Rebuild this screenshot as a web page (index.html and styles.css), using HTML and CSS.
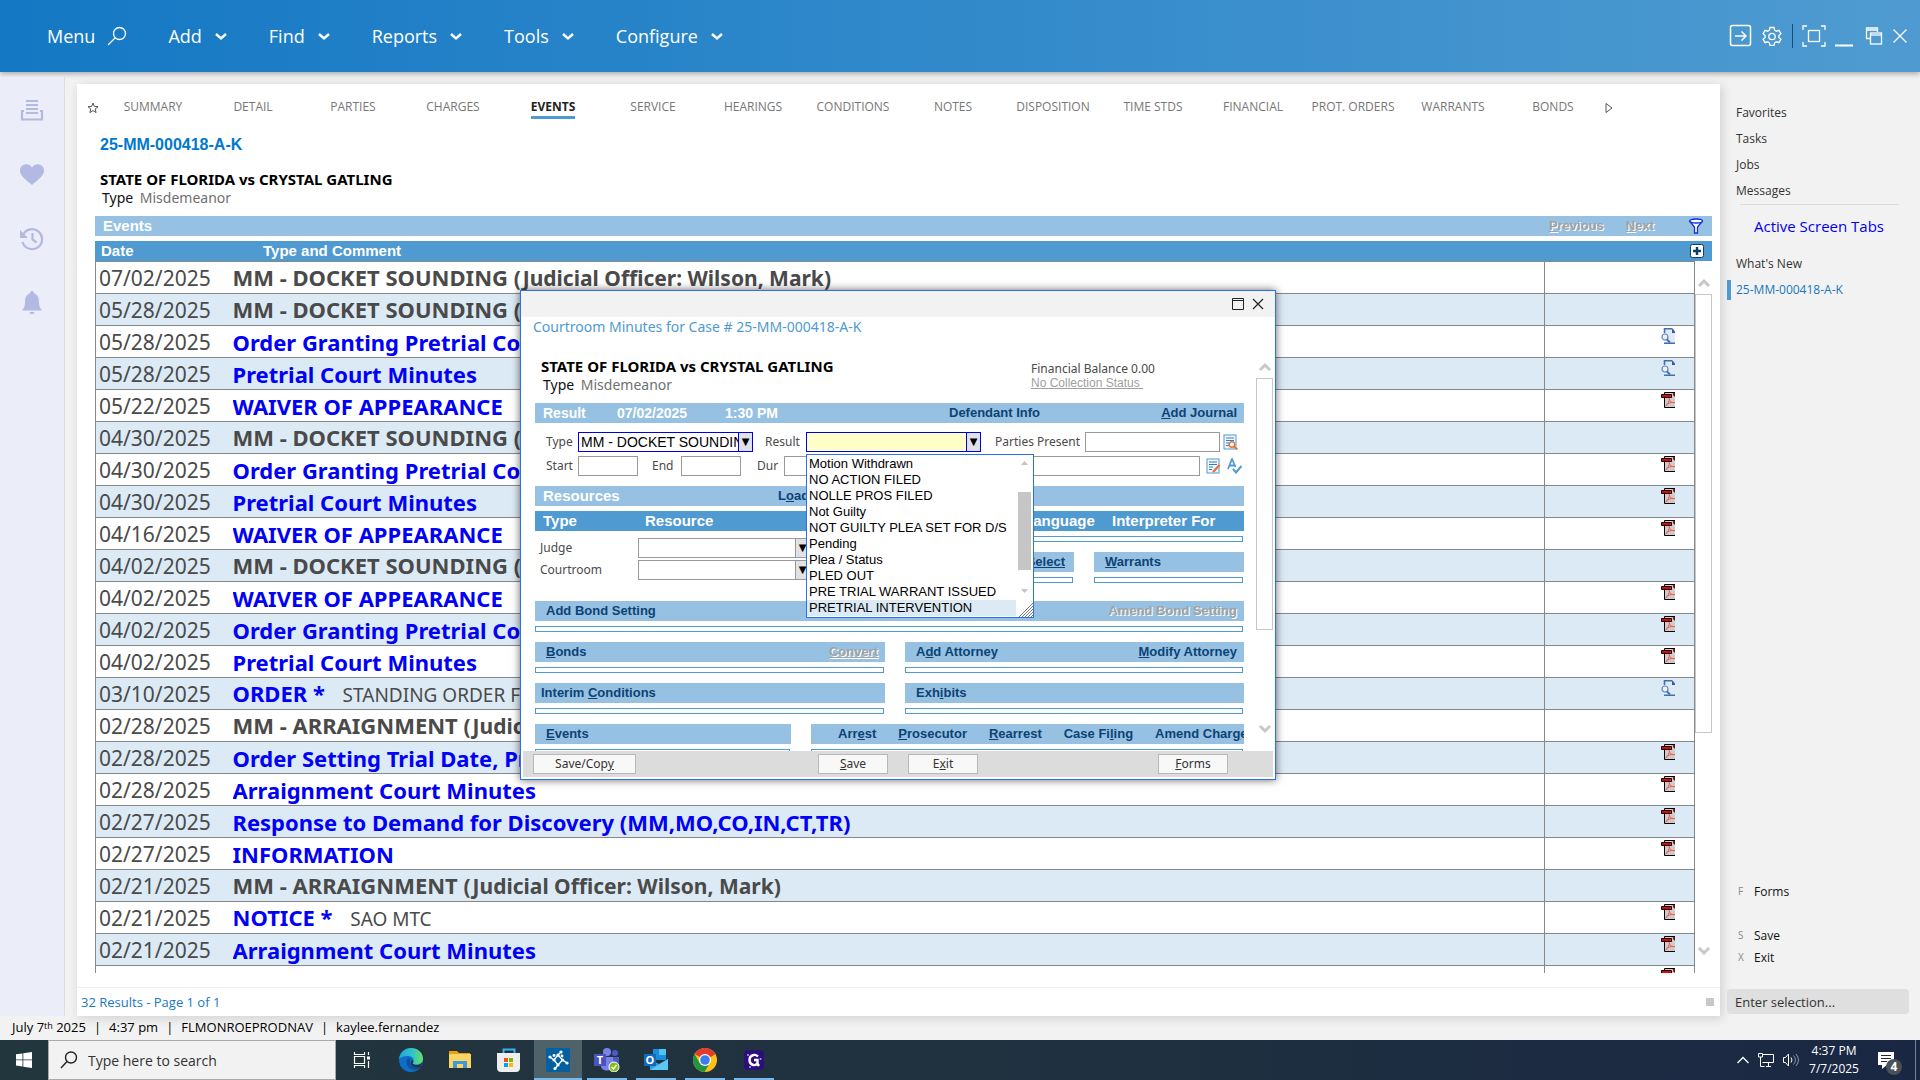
FILE: index.html
```
<!DOCTYPE html>
<html lang="en">
<head>
    <title>Court Case Events</title>
    <meta charset="UTF-8" />
    <meta name="viewport" content="width=device-width, initial-scale=1.0" />
    <link rel="stylesheet" href="styles.css">
</head>
<body>
    <svg class="sprite">
        <symbol id="chev" viewBox="0 0 14 14"><path d="M2 5l5 4.500 5-4.500" fill="none" stroke="currentColor" stroke-width="2.400"/></symbol>
        <symbol id="scrollUp" viewBox="0 0 14 10"><path d="M2 8l5-5 5 5" fill="none" stroke="#c8c8c8" stroke-width="3"/></symbol>
        <symbol id="scrollDown" viewBox="0 0 14 10"><path d="M2 2l5 5 5-5" fill="none" stroke="#c8c8c8" stroke-width="3"/></symbol>
        <symbol id="pdf" viewBox="0 0 14 16">
            <path d="M3.500 1v14.500H14V1z" fill="#ccc"/>
            <path d="M3.500 5v10.500H14M3.500 3V.500H14" fill="none" stroke="#000"/>
            <path d="M.500 2.500h10v3H.500z" fill="#e00" stroke="#000"/>
            <path d="M12 .500h2V4h-1z" fill="#e00" stroke="#000" stroke-width=".6"/>
            <path d="M4.500 14c2-1 4-4.500 3.800-7.500.5 3.500 3 4.500 5.700 4-4-.5-7 .5-9 3" fill="none" stroke="#f75a50"/>
        </symbol>
        <symbol id="doc" viewBox="0 0 14 16">
            <path d="M3.500.500h8.500l2 2V15.500H3.500z" fill="#e3e9f4"/>
            <path d="M3.500 5V.800H11M3 15.200h11" fill="none" stroke="#3e6fae" stroke-width="1.600"/>
            <path d="M11 0l3 3.500V5h-3z" fill="#2f5fa0"/>
            <circle cx="4" cy="9" r="3" fill="#e8f3fb" stroke="#5a86bd" stroke-width="1.200"/>
            <path d="M6 11.500l3 3" stroke="#3e6fae" stroke-width="1.800"/>
        </symbol>
    </svg>

    <header class="topbar">
        <nav class="menu">
            <a href="#" class="menu-item">Menu
                <svg width="20" height="20" viewBox="0 0 20 20"><circle cx="12.500" cy="7.500" r="6" fill="none" stroke="currentColor" stroke-width="1.300"/><path d="M8 12l-7 7" stroke="currentColor" stroke-width="1.300"/></svg>
            </a>
            <a href="#" class="menu-item">Add <svg width="14" height="14"><use href="#chev"/></svg></a>
            <a href="#" class="menu-item">Find <svg width="14" height="14"><use href="#chev"/></svg></a>
            <a href="#" class="menu-item">Reports <svg width="14" height="14"><use href="#chev"/></svg></a>
            <a href="#" class="menu-item">Tools <svg width="14" height="14"><use href="#chev"/></svg></a>
            <a href="#" class="menu-item">Configure <svg width="14" height="14"><use href="#chev"/></svg></a>
        </nav>
        <div class="window-tools">
            <button class="tool" title="Go"><svg width="24" height="24" viewBox="0 0 24 24" fill="none" stroke="#fff"><rect x="1.500" y="1.500" width="20" height="20" rx="2" stroke-width="1.500"/><path d="M6 12h11M12.500 7.500L17 12l-4.500 4.500" stroke-width="1.500"/></svg></button>
            <button class="tool" title="Settings"><svg width="20" height="20" viewBox="0 0 20 20" fill="none" stroke="#fff" stroke-width="1.300"><path d="M8 1.500h4l.6 2.700 1.700 1 2.600-.9 2 3.400-2 1.800v2l2 1.800-2 3.400-2.600-.9-1.700 1-.6 2.700H8l-.6-2.700-1.700-1-2.600.9-2-3.400 2-1.800v-2l-2-1.800 2-3.400 2.600.9 1.700-1z"/><circle cx="10" cy="10.500" r="3.200"/></svg></button>
            <span class="tool-divider"></span>
            <button class="tool" title="Full screen"><svg width="24" height="24" viewBox="0 0 24 24" fill="none" stroke="#fff" stroke-width="1.300"><path d="M1 6V2h4M19 2h4v4M23 18v4h-4M5 22H1v-4"/><rect x="6.500" y="6.500" width="11" height="11"/></svg></button>
            <button class="tool" title="Minimize"><svg width="18" height="24" viewBox="0 0 18 24"><path d="M0 21.500h18" stroke="#fff" stroke-width="2"/></svg></button>
            <button class="tool tool-restore" title="Restore"><svg width="18" height="20" viewBox="0 0 18 20" fill="none" stroke="#fff" stroke-width="1.300"><path d="M5 12.500H1.500V2h11v4M1.500 4h11"/><rect x="5.500" y="7" width="11" height="11"/><path d="M5.500 9h11"/></svg></button>
            <button class="tool" title="Close"><svg width="16" height="16" viewBox="0 0 16 16"><path d="M1.500 1.500l13 13M14.500 1.500l-13 13" stroke="#fff" stroke-width="1.200"/></svg></button>
        </div>
    </header>

    <div class="workspace">
        <aside class="rail">
            <button title="Inbox"><svg width="24" height="24" viewBox="0 0 24 24" fill="none" stroke="#b3b9e2" stroke-width="2"><path d="M6 2h12M6 6h12M6 10h12M6 14h12"/><path d="M4 12H2v8.500h20V12h-2" stroke-width="2.200"/></svg></button>
            <button title="Favorites"><svg width="24" height="24" viewBox="0 0 24 24"><path d="M12 22C5 16 0 12.500 0 7.500 0 1 8.500-1 12 4.500 15.500-1 24 1 24 7.500 24 12.500 19 16 12 22z" fill="#b3b9e2"/></svg></button>
            <button title="History"><svg width="24" height="24" viewBox="0 0 24 24" fill="none" stroke="#b3b9e2" stroke-width="2.200"><path d="M3 8a10 10 0 1 1-.5 7"/><path d="M12.500 6v6.500l4 3"/><path d="M0 3v8h8z" fill="#b3b9e2" stroke="none"/></svg></button>
            <button title="Alerts"><svg width="24" height="24" viewBox="0 0 24 24"><path d="M12 0c1.300 0 2 1 2 2.500 4 1 5 4.500 5 9 0 4 1 5.500 3 8H2c2-2.500 3-4 3-8 0-4.500 1-8 5-9C10 1 10.700 0 12 0zM9.500 21h5c-.5 3-4.500 3-5 0z" fill="#b3b9e2"/></svg></button>
        </aside>

        <main class="panel">
            <nav class="tabs">
                <button class="tab-icon tab-star" title="Favorite"><svg width="12" height="12" viewBox="0 0 12 12"><path d="M6 1l1.400 3.500 3.600.2-2.800 2.300.9 3.600L6 8.600l-3.100 2 .9-3.600L1 4.700l3.600-.2z" fill="none" stroke="#555"/></svg></button>
                <a href="#"><span>SUMMARY</span></a>
                <a href="#"><span>DETAIL</span></a>
                <a href="#"><span>PARTIES</span></a>
                <a href="#"><span>CHARGES</span></a>
                <a href="#" class="active"><span>EVENTS</span></a>
                <a href="#"><span>SERVICE</span></a>
                <a href="#"><span>HEARINGS</span></a>
                <a href="#"><span>CONDITIONS</span></a>
                <a href="#"><span>NOTES</span></a>
                <a href="#"><span>DISPOSITION</span></a>
                <a href="#"><span>TIME STDS</span></a>
                <a href="#"><span>FINANCIAL</span></a>
                <a href="#"><span>PROT. ORDERS</span></a>
                <a href="#"><span>WARRANTS</span></a>
                <a href="#"><span>BONDS</span></a>
                <button class="tab-icon" title="More tabs"><svg width="12" height="12" viewBox="0 0 12 12"><path d="M3 1.500v9L9 6z" fill="none" stroke="#555"/></svg></button>
            </nav>

            <section class="case-head">
                <h1 class="case-number">25-MM-000418-A-K</h1>
                <h2 class="case-style">STATE OF FLORIDA vs CRYSTAL GATLING</h2>
                <p class="case-type"><b>Type</b> Misdemeanor</p>
            </section>

            <section class="events">
                <div class="bar events-title">
                    <span>Events</span>
                    <div class="pager">
                        <a href="#" class="off"><u>P</u>revious</a>
                        <a href="#" class="off"><u>N</u>ext</a>
                        <svg width="16" height="16" viewBox="0 0 16 16"><path d="M1.500 3l5 6v6h3V9l5-6" fill="#fff" stroke="#1230d0" stroke-width="1.300"/><ellipse cx="8" cy="3" rx="6.500" ry="2" fill="#fff" stroke="#1230d0" stroke-width="1.300"/></svg>
                    </div>
                </div>
                <div class="bar bar-dark events-head">
                    <span class="col-date">Date</span>
                    <span class="col-type">Type and Comment</span>
                    <svg width="14" height="14" viewBox="0 0 14 14"><rect x=".5" y=".5" width="13" height="13" rx="2" fill="#fff" stroke="#0d3c66"/><path d="M7 3v8M3 7h8" stroke="#0d3c66" stroke-width="2.400"/></svg>
                </div>
                <div class="events-list">
                    <div class="table-clip">
                        <table class="events-table">
                            <colgroup><col class="c-date"><col><col class="c-doc"></colgroup>
                            <tbody id="eventRows"></tbody>
                        </table>
                    </div>
                    <div class="scroll">
                        <svg width="14" height="10"><use href="#scrollUp"/></svg>
                        <div class="scroll-track"><div class="scroll-thumb thumb-main"></div></div>
                        <svg width="14" height="10"><use href="#scrollDown"/></svg>
                    </div>
                </div>
            </section>

            <footer class="panel-foot">
                <span>32 Results - Page 1 of 1</span>
                <i class="corner"></i>
            </footer>
        </main>

        <aside class="side">
            <nav class="side-links">
                <a href="#">Favorites</a>
                <a href="#">Tasks</a>
                <a href="#">Jobs</a>
                <a href="#">Messages</a>
            </nav>
            <h3 class="side-title">Active Screen Tabs</h3>
            <nav class="side-links">
                <a href="#">What's New</a>
                <a href="#" class="current">25-MM-000418-A-K</a>
            </nav>
            <div class="side-actions">
                <button class="forms"><kbd>F</kbd>Forms</button>
                <button><kbd>S</kbd>Save</button>
                <button><kbd>X</kbd>Exit</button>
            </div>
            <input class="side-input" type="text" placeholder="Enter selection..." aria-label="Enter selection">
        </aside>

        <div class="modal" role="dialog">
            <div class="modal-top">
                <button title="Maximize"><svg width="12" height="12" viewBox="0 0 12 12"><path d="M.500.500h11v11H.500zM0 2.500h12" fill="none" stroke="#222"/></svg></button>
                <button title="Close"><svg width="12" height="12" viewBox="0 0 12 12"><path d="M1 1l10 10M11 1L1 11" stroke="#222" stroke-width="1.200"/></svg></button>
            </div>
            <h2 class="modal-title">Courtroom Minutes for Case # 25-MM-000418-A-K</h2>

            <div class="modal-body">
                <div class="form">
                    <div class="modal-case">
                        <div>
                            <h2 class="case-style">STATE OF FLORIDA vs CRYSTAL GATLING</h2>
                            <p class="case-type"><b>Type</b> Misdemeanor</p>
                        </div>
                        <div class="balance">
                            <p>Financial Balance 0.00</p>
                            <a href="#">No Collection Status&nbsp;</a>
                        </div>
                    </div>

                    <div class="bar result-bar">
                        <span>Result</span><span>07/02/2025</span><span>1:30 PM</span>
                        <a href="#">Defendant Info</a>
                        <a href="#"><u>A</u>dd Journal</a>
                    </div>

                    <div class="fields">
                        <label for="type">Type</label>
                        <span class="combo blue w-combo"><select id="type"><option>MM - DOCKET SOUNDING</option></select><i>▼</i></span>
                        <label for="result" class="l-result">Result</label>
                        <span class="combo blue yellow w-combo"><select id="result"><option></option></select><i>▼</i>
                            <ul class="options" role="listbox">
                                <li>Motion Withdrawn</li>
                                <li>NO ACTION FILED</li>
                                <li>NOLLE PROS FILED</li>
                                <li>Not Guilty</li>
                                <li>NOT GUILTY PLEA SET FOR D/S</li>
                                <li>Pending</li>
                                <li>Plea / Status</li>
                                <li>PLED OUT</li>
                                <li>PRE TRIAL WARRANT ISSUED</li>
                                <li class="picked">PRETRIAL INTERVENTION</li>
                                <svg class="options-scroll" width="13" height="138" viewBox="0 0 13 138"><path d="M3 8l3.500-4L10 8zM3 132l3.500 4 3.500-4z" fill="#c4c4c4"/><path d="M0 35h13v78H0z" fill="#c6c6c6"/></svg>
                                <svg class="grip" width="14" height="14" viewBox="0 0 14 14"><path d="M0 14L14 0M3 14L14 3M6 14l8-8M9 14l5-5M12 14l2-2" stroke="#777"/></svg>
                            </ul>
                        </span>
                        <label for="parties" class="l-parties">Parties Present</label>
                        <input id="parties" type="text" class="grow">
                        <svg class="field-icon end-icon" width="15" height="16" viewBox="0 0 15 16"><rect x="1" y="1" width="12" height="14" fill="#f2f8fd" stroke="#4f9ad0"/><path d="M3 4h8M3 6.500h8M3 9h3M3 11.500h3" stroke="#2f7fc0"/><circle cx="9" cy="10.500" r="2.800" fill="#fff" stroke="#e8743b" stroke-width="1.500"/><path d="M11 12.500l3.500 3" stroke="#e8743b" stroke-width="1.800"/></svg>
                    </div>
                    <div class="fields fields-2">
                        <label for="start">Start</label><input id="start" type="text" class="w-time">
                        <label for="end" class="l-end">End</label><input id="end" type="text" class="w-time">
                        <label for="dur" class="l-dur">Dur</label><input id="dur" type="text" class="grow">
                        <svg class="field-icon" width="15" height="16" viewBox="0 0 15 16"><rect x="1" y="1" width="12" height="14" fill="#f2f8fd" stroke="#4f9ad0"/><path d="M3 4h8M3 6.500h8M3 9h4M3 11.500h3" stroke="#2f7fc0"/><path d="M7 14l6.500-7" stroke="#e8743b" stroke-width="2.400"/></svg>
                        <svg class="field-icon spell-icon" width="15" height="16" viewBox="0 0 15 16" fill="none" stroke="#4f9ad0" stroke-width="1.800"><path d="M1 11L5 1l3.500 8M2.500 7.500H8"/><path d="M6 11l3 3.500L14.500 8" stroke-width="2"/></svg>
                    </div>

                    <div class="bar resources-bar">
                        <span>Resources</span>
                        <a href="#">L<u>o</u>ad</a>
                    </div>
                    <div class="bar bar-dark resources-head">
                        <span>Type</span><span>Resource</span><span>Language</span><span>Interpreter For</span>
                    </div>

                    <div class="resources">
                        <div class="resource-rows">
                            <label for="judge">Judge</label><span class="combo"><select id="judge"><option></option></select><i>▼</i></span>
                            <label for="room">Courtroom</label><span class="combo"><select id="room"><option></option></select><i>▼</i></span>
                        </div>
                        <div class="resource-side">
                            <div class="slot wide"></div>
                            <div><div class="bar right"><a href="#"><u>Select</u></a></div><div class="slot"></div></div>
                            <div><div class="bar"><a href="#"><u>W</u>arrants</a></div><div class="slot"></div></div>
                        </div>
                    </div>

                    <div class="block">
                        <div class="bar"><a href="#">Add Bond Setting</a><a href="#" class="off">Amend Bond Setting</a></div>
                        <div class="slot"></div>
                    </div>
                    <div class="pair">
                        <div class="block"><div class="bar"><a href="#"><u>B</u>onds</a><a href="#" class="off"><u>Convert</u></a></div><div class="slot"></div></div>
                        <div class="block"><div class="bar"><a href="#">A<u>d</u>d Attorney</a><a href="#"><u>M</u>odify Attorney</a></div><div class="slot"></div></div>
                        <div class="block"><div class="bar tight"><a href="#">Interim <u>C</u>onditions</a></div><div class="slot"></div></div>
                        <div class="block"><div class="bar"><a href="#">Exh<u>i</u>bits</a></div><div class="slot"></div></div>
                    </div>
                    <div class="last-pair">
                        <div><div class="bar"><a href="#"><u>E</u>vents</a></div><div class="slot"></div></div>
                        <div><div class="bar charge-links"><a href="#">Arr<u>e</u>st</a><a href="#"><u>P</u>rosecutor</a><a href="#"><u>R</u>earrest</a><a href="#">Case Fi<u>l</u>ing</a><a href="#">Amend Char<u>g</u>e</a></div><div class="slot"></div></div>
                    </div>
                </div>
                <div class="scroll">
                    <svg width="14" height="10"><use href="#scrollUp"/></svg>
                    <div class="scroll-track"><div class="scroll-thumb thumb-modal"></div></div>
                    <svg width="14" height="10"><use href="#scrollDown"/></svg>
                </div>
            </div>

            <div class="modal-foot">
                <button class="b-copy">Save/Cop<u>y</u></button>
                <button class="b-save"><u>S</u>ave</button>
                <button>E<u>x</u>it</button>
                <button class="b-forms"><u>F</u>orms</button>
            </div>
        </div>
    </div>

    <div class="status">
        <span>July 7<sup>th</sup> 2025</span><span>4:37 pm</span><span>FLMONROEPRODNAV</span><span>kaylee.fernandez</span>
    </div>

    <div class="taskbar">
        <button class="start" title="Start"><svg width="16" height="16" viewBox="0 0 16 16" fill="#fff"><path d="M0 2.300l6.500-.9v6.100H0zM7.300 1.300L16 0v7.500H7.300zM0 8.300h6.500v6.200L0 13.600zM7.300 8.300H16V16l-8.700-1.200z"/></svg></button>
        <label class="search">
            <svg width="18" height="18" viewBox="0 0 18 18" fill="none" stroke="#222" stroke-width="1.400"><circle cx="11" cy="6.500" r="5.500"/><path d="M7 10.500L1 17"/></svg>
            <input type="text" placeholder="Type here to search">
        </label>
        <div class="apps">
            <button title="Task view"><svg width="18" height="16" viewBox="0 0 18 16" fill="none" stroke="#fff" stroke-width="1.200"><path d="M1.500 0v2.500h10V0M1.500 16v-2.500h10V16M1.500 4.500h10v7h-10zM15.500 0v3M15.500 9v7"/><path d="M14 4.500h3v3h-3z" fill="#fff" stroke="none"/></svg></button>
            <button title="Edge"><svg width="24" height="24" viewBox="0 0 24 24"><defs><linearGradient id="eg" x1="0" x2="1"><stop offset="0" stop-color="#1fa5dc"/><stop offset=".6" stop-color="#34c6c4"/><stop offset="1" stop-color="#6be05a"/></linearGradient></defs><circle cx="12" cy="12" r="12" fill="#0c6fc8"/><path d="M0 11C1 4 6 0 12 0c7 0 12 5 12 10.500 0 4-3 6-6.500 6-3 0-4-1-3.500-2 2-3-.5-6.500-5-6.500-4 0-7 1-9 3z" fill="url(#eg)"/><path d="M9 10c-4 5 0 12 7 12 2 0 4-1 6-3-7 2-12-2-10.500-8z" fill="#12509c"/><path d="M14 14.500c-1 1.200.5 2.500 3.500 2.500 2 0 4-.6 5.500-2.500L22 19c-5 1.500-10-.5-10-4 0-2 1-3 1-3 1.500.5 1.700 1.500 1 2.500z" fill="#22343d"/></svg></button>
            <button title="Files"><svg width="22" height="20" viewBox="0 0 22 20"><path d="M0 1h8l2 2h11v5H0z" fill="#e8a010"/><path d="M0 4h22v14H0z" fill="#fcd462"/><path d="M4 18v-7h14v7h-4v-4H8v4z" fill="#3c9be0"/></svg></button>
            <button title="Store"><svg width="24" height="24" viewBox="0 0 24 24"><path d="M6.500 6V1.500h11V6" fill="none" stroke="#38b6f0" stroke-width="2"/><path d="M0 5h23v15c0 2-1 4-4 4H4c-3 0-4-2-4-4z" fill="#eee"/><path d="M7 10h4v4H7z" fill="#f25022"/><path d="M12 10h4v4h-4z" fill="#7fba00"/><path d="M7 15h4v4H7z" fill="#00a4ef"/><path d="M12 15h4v4h-4z" fill="#ffb900"/></svg></button>
            <button class="open focused" title="Court app"><svg width="24" height="24" viewBox="0 0 24 24"><path d="M0 0h24v24H0z" fill="#0560a2"/><g stroke="#fff" stroke-width="1.300" fill="none"><path d="M4 9l4 3M8 12l4-5 4.500 5-4.500 5zM12 7l3-3M16.500 12l4.500 3M12 17l-3 3.500"/></g><g fill="#fff"><circle cx="4" cy="9" r="1.600"/><circle cx="8" cy="12" r="1.600"/><circle cx="12" cy="7" r="1.600"/><circle cx="16.500" cy="12" r="1.600"/><circle cx="12" cy="17" r="1.600"/><circle cx="15" cy="4" r="1.600"/><circle cx="21" cy="15" r="1.600"/><circle cx="9" cy="20.500" r="1.600"/><circle cx="16" cy="8" r="1.400"/><circle cx="8" cy="7.500" r="1.400"/></g></svg></button>
            <button class="open" title="Teams"><svg width="26" height="24" viewBox="0 0 26 24"><circle cx="13" cy="4" r="4" fill="#7b83eb"/><circle cx="21" cy="5" r="3" fill="#5059c9"/><path d="M17 9h8v7c0 5-6 5-8 2z" fill="#5059c9"/><path d="M7 9h12v9c0 6-12 6-12 0z" fill="#7b83eb"/><path d="M0 6h12v12H0z" fill="#4b53bc"/><text x="6" y="16" class="glyph">T</text><circle cx="20" cy="19" r="5" fill="#86bc1c" stroke="#fff"/><path d="M17.500 19l2 2 3-4" fill="none" stroke="#fff" stroke-width="1.400"/></svg></button>
            <button class="open" title="Outlook"><svg width="24" height="22" viewBox="0 0 24 22"><path d="M9 0h13v11H9z" fill="#1a8ddc"/><path d="M15 0h7v6h-7z" fill="#4fc3f0"/><path d="M6 10l9 5 9-5v11H6z" fill="#2a9fe4"/><path d="M6 21l18-11v11z" fill="#5cc6f4"/><path d="M0 5h12v12H0z" fill="#0f6cbd"/><text x="6" y="15" class="glyph">O</text></svg></button>
            <button class="open" title="Chrome"><svg width="24" height="24" viewBox="0 0 24 24"><circle cx="12" cy="12" r="12" fill="#fbc116"/><path d="M12 12L1.600 6A12 12 0 0 1 22.400 6z" fill="#e33b2e"/><path d="M1.600 6a12 12 0 0 0 10 18l5.200-9L12 12 6.800 15z" fill="#229342"/><path d="M12 6h10.400l-5 3z" fill="#e33b2e"/><circle cx="12" cy="12" r="6" fill="#fff"/><circle cx="12" cy="12" r="4.800" fill="#3b7ded"/></svg></button>
            <button class="open" title="Recorder"><svg width="20" height="20" viewBox="0 0 20 20"><rect width="20" height="20" rx="4" fill="#2c0f78"/><path d="M14 6.500C11 3.500 5.500 5 5.500 10s5.500 6.500 8 3.500V10H10M13 13l2 3" fill="none" stroke="#fff" stroke-width="2.400"/><circle cx="4" cy="5" r="1" fill="#b9a0ff"/><circle cx="16.500" cy="9" r="1" fill="#b9a0ff"/><circle cx="6" cy="17" r="1" fill="#b9a0ff"/></svg></button>
        </div>
        <div class="tray">
            <svg width="12" height="8" viewBox="0 0 12 8"><path d="M.500 7L6 1.500 11.500 7" fill="none" stroke="#fff" stroke-width="1.300"/></svg>
            <svg width="16" height="14" viewBox="0 0 16 14" fill="none" stroke="#fff"><path d="M4.500 1.500h11v8h-11M8 13.500h5M10.500 10v3M2.500 4v9.500h4"/><path d="M.500.500h4v3.500h-4z"/></svg>
            <svg width="17" height="14" viewBox="0 0 17 14" fill="none" stroke="#fff"><path d="M.500 4.500h2l3-3.500v12l-3-3.500h-2zM8 4.500q2 2.500 0 5"/><path d="M10.500 2.500q4 4.500 0 9M13 1q5 6 0 12" stroke="#8a93a3"/></svg>
            <div class="clock"><span>4:37 PM</span><span>7/7/2025</span></div>
            <div class="notice"><svg width="16" height="17" viewBox="0 0 16 17"><path d="M0 0h16v13H9l-5 4v-4H0z" fill="#fff"/><path d="M3 3.500h10M3 6.500h10M3 9.500h6" stroke="#1b2743"/></svg><span>4</span></div>
            <i class="desk"></i>
        </div>
    </div>

    <script>
        const docket = 'MM - DOCKET SOUNDING';
        const arraign = 'MM - ARRAIGNMENT';
        const officer = '(Judicial Officer: Wilson, Mark)';

        // date, title, kind of document, officer, comment
        const events = [
            ['07/02/2025', docket, '', officer],
            ['05/28/2025', docket, '', officer],
            ['05/28/2025', 'Order Granting Pretrial Continuance', 'doc'],
            ['05/28/2025', 'Pretrial Court Minutes', 'doc'],
            ['05/22/2025', 'WAIVER OF APPEARANCE', 'pdf'],
            ['04/30/2025', docket, '', officer],
            ['04/30/2025', 'Order Granting Pretrial Continuance', 'pdf'],
            ['04/30/2025', 'Pretrial Court Minutes', 'pdf'],
            ['04/16/2025', 'WAIVER OF APPEARANCE', 'pdf'],
            ['04/02/2025', docket, '', officer],
            ['04/02/2025', 'WAIVER OF APPEARANCE', 'pdf'],
            ['04/02/2025', 'Order Granting Pretrial Continuance', 'pdf'],
            ['04/02/2025', 'Pretrial Court Minutes', 'pdf'],
            ['03/10/2025', 'ORDER *', 'doc', '', 'STANDING ORDER FOR'],
            ['02/28/2025', arraign, '', officer],
            ['02/28/2025', 'Order Setting Trial Date, Pretrial', 'pdf'],
            ['02/28/2025', 'Arraignment Court Minutes', 'pdf'],
            ['02/27/2025', 'Response to Demand for Discovery (MM,MO,CO,IN,CT,TR)', 'pdf'],
            ['02/27/2025', 'INFORMATION', 'pdf'],
            ['02/21/2025', arraign, '', officer],
            ['02/21/2025', 'NOTICE *', 'pdf', '', 'SAO MTC'],
            ['02/21/2025', 'Arraignment Court Minutes', 'pdf'],
            ['', '', 'pdf']
        ];

        document.getElementById('eventRows').innerHTML = events.map(([date, title, file, judge, comment]) => `
            <tr>
                <td>${date}</td>
                <td>${file ? `<a href="#">${title}</a>` : `<b>${title}</b>`}
                    ${judge ? `<b class="officer">${judge}</b>` : ''}
                    ${comment ? `<span class="comment">${comment}</span>` : ''}</td>
                <td>${file ? `<svg width="14" height="16"><use href="#${file}"/></svg>` : ''}</td>
            </tr>`).join('');
    </script>
</body>
</html>
```
FILE: styles.css
```
* {
    box-sizing: border-box;
}

body {
    margin: 0;
    height: 100vh;
    display: flex;
    flex-direction: column;
    overflow: hidden;
    background: #f2f2f2;
    color: #4a4a4a;
    font-family: "Open Sans", sans-serif;
    font-size: 12px;
}

h1, h2, h3, p, ul {
    margin: 0;
    padding: 0;
}

a {
    color: inherit;
    text-decoration: none;
}

button {
    background: none;
    border: none;
    padding: 0;
    color: inherit;
    font: inherit;
    cursor: pointer;
}

svg {
    display: block;
    flex: none;
}

i {
    font-style: normal;
}

.sprite {
    position: absolute;
    width: 0;
    height: 0;
}

/* Top bar */
.topbar {
    position: relative;
    height: 72px;
    flex: none;
    display: flex;
    justify-content: space-between;
    align-items: center;
    padding: 0 12px 0 47px;
    background: linear-gradient(90deg, #1478c4, #4f9bd1);
    box-shadow: 0 2px 5px rgba(0, 0, 0, 0.3);
    color: #fff;
}

.menu {
    display: flex;
    gap: 41px;
}

.menu-item {
    display: flex;
    align-items: center;
    gap: 12px;
    font-size: 18px;
    line-height: 28px;
}

.window-tools {
    display: flex;
    align-items: center;
    gap: 9px;
}

.tool-divider {
    width: 1px;
    height: 24px;
    margin-left: 1px;
    background: #0e4d80;
}

.tool-restore {
    margin-left: 3px;
}

/* Workspace */
.workspace {
    position: relative;
    flex: 1;
    min-height: 0;
    display: grid;
    grid-template-columns: 65px 1fr 200px;
}

.rail {
    margin-top: 5px;
    padding-top: 22px;
    display: flex;
    flex-direction: column;
    align-items: center;
    gap: 40px;
    background: #ebeef8;
    border-right: 1px solid #dcdce4;
}

.panel {
    margin: 12px 0 0 12px;
    min-height: 0;
    min-width: 0;
    display: flex;
    flex-direction: column;
    background: #fff;
    box-shadow: 2px 2px 10px rgba(0, 0, 0, 0.15);
}

.tabs {
    display: flex;
    align-items: center;
    padding: 10px 105px 0 10px;
    height: 38px;
    flex: none;
    color: #777;
    line-height: 18px;
}

.tabs a {
    flex: 1;
    text-align: center;
}

.tabs span {
    display: inline-block;
    border-bottom: 3px solid transparent;
}

.tabs .active span {
    color: #222;
    font-weight: bold;
    border-color: #4f9ad0;
}

.tab-icon {
    width: 12px;
}

.tab-star {
    margin-right: 4px;
}

.case-head {
    padding: 13px 0 0 23px;
    height: 94px;
    flex: none;
}

.case-number {
    color: #0078d0;
    font: bold 16px/20px "Liberation Sans", sans-serif;
    margin-bottom: 14px;
}

.case-style {
    color: #000;
    font: bold 15px/20px "Noto Sans", sans-serif;
}

.case-type {
    padding-left: 2px;
    color: #707070;
    font: 14px/18px "Noto Sans", sans-serif;
}

.case-type b {
    color: #111;
    font-weight: normal;
    margin-right: 3px;
}

.bar {
    height: 20px;
    display: flex;
    justify-content: space-between;
    align-items: center;
    background: #96c1e2;
    color: #fff;
    font: bold 15px/20px "Liberation Sans", sans-serif;
    white-space: nowrap;
}

.bar a {
    color: #0c4374;
    font-size: 13px;
}

.bar .off {
    color: #a2a2a2;
    text-shadow: 1px 1px 0 #fff;
}

.bar-dark {
    background: #4f9ad0;
}

.events {
    flex: 1;
    min-height: 0;
    margin: 0 8px 14px 18px;
    display: flex;
    flex-direction: column;
}

.events-title {
    padding: 0 8px;
    margin-bottom: 5px;
    flex: none;
}

.pager {
    display: flex;
    align-items: center;
    gap: 22px;
}

.pager svg {
    margin-left: 12px;
}

.events-head {
    padding: 0 8px 0 6px;
    flex: none;
}

.col-date {
    width: 162px;
}

.col-type {
    flex: 1;
}

.events-list {
    flex: 1;
    min-height: 0;
    display: flex;
}

.table-clip {
    flex: 1;
    overflow: hidden;
}

.events-table {
    width: 100%;
    table-layout: fixed;
    border-collapse: collapse;
    border: 1px solid #888;
}

.c-date {
    width: 137px;
}

.c-doc {
    width: 150px;
}

.events-table tr {
    height: 32px;
    border-top: 1px solid #888;
}

.events-table tr:nth-child(even) {
    background: #dceaf5;
}

.events-table td {
    padding: 0 0 0 3px;
    font: 21px/28px "Noto Sans", sans-serif;
    white-space: nowrap;
    overflow: hidden;
}

.events-table td:nth-child(2) {
    padding-left: 0;
    font-size: 22px;
}

.events-table td:last-child {
    border-left: 1px solid #888;
    padding: 2px 19px 0 0;
    vertical-align: top;
}

.events-table td svg {
    margin-left: auto;
}

.events-table a {
    color: #0000f8;
    font-weight: bold;
}

.officer {
    font-size: 21px;
}

.comment {
    margin-left: 12px;
    font-size: 19px;
}

.scroll {
    width: 17px;
    display: flex;
    flex-direction: column;
    align-items: center;
}

.events-list .scroll {
    padding: 17px 0;
}

.scroll-track {
    flex: 1;
    width: 100%;
    margin: 6px 0;
}

.scroll-thumb {
    border: 1px solid #c8c8c8;
    background: #fff;
}

.thumb-main {
    height: 68%;
}

.thumb-modal {
    height: 252px;
}

.panel-foot {
    height: 29px;
    flex: none;
    display: flex;
    justify-content: space-between;
    align-items: center;
    padding: 0 6px 0 4px;
    border-top: 1px solid #eee;
    color: #1878c0;
    font-size: 13px;
}

.corner {
    width: 8px;
    height: 8px;
    background: #c8c8c8;
}

/* Right side */
.side {
    padding: 31px 11px 2px 7px;
    display: flex;
    flex-direction: column;
    color: #333;
}

.side-links a {
    display: block;
    margin-bottom: 6px;
    padding-left: 9px;
    line-height: 20px;
}

.side-links a:last-child {
    margin-bottom: 3px;
}

.side-title {
    margin: 0 10px 17px 13px;
    padding: 10px 0 0 14px;
    border-top: 1px solid #dcdcdc;
    color: #0000f0;
    font-size: 15px;
    font-weight: normal;
    line-height: 22px;
}

.side-links .current {
    padding-left: 5px;
    border-left: 4px solid #4f9ad0;
    color: #1878c0;
}

.side-actions {
    margin-top: auto;
    padding-bottom: 21px;
}

.side-actions button {
    display: flex;
    align-items: center;
    height: 22px;
    padding-left: 11px;
    color: #111;
}

.side-actions .forms {
    margin-bottom: 22px;
}

kbd {
    width: 16px;
    color: #888;
    font-family: inherit;
    font-size: 10px;
    text-align: left;
}

.side-input {
    width: 100%;
    height: 25px;
    padding: 0 8px;
    border: none;
    border-radius: 4px;
    background: #dfdfdf;
    font: 13px "Open Sans", sans-serif;
}

input::placeholder {
    color: #333;
    opacity: 1;
}

/* Courtroom minutes window */
.modal {
    position: absolute;
    left: 520px;
    top: 218px;
    width: 756px;
    height: 490px;
    display: flex;
    flex-direction: column;
    background: #fff;
    border: 1px solid #2a72ea;
    box-shadow: 0 0 8px rgba(0, 0, 0, 0.6);
}

.modal-top {
    height: 26px;
    flex: none;
    display: flex;
    justify-content: flex-end;
    align-items: center;
    gap: 8px;
    padding-right: 11px;
    background: #f2f2f2;
}

.modal-title {
    padding-left: 12px;
    color: #4f9ad0;
    font: 14px/20px "Noto Sans", sans-serif;
}

.modal-body {
    flex: 1;
    min-height: 0;
    display: flex;
    justify-content: space-between;
    padding: 19px 2px 0 14px;
}

.form {
    width: 709px;
    height: 395px;
    overflow: hidden;
}

.modal-body .scroll {
    padding: 6px 0 17px;
}

.modal-case {
    display: flex;
    justify-content: space-between;
    padding-left: 6px;
    height: 47px;
}

.balance {
    width: 213px;
    padding-top: 6px;
    font: 12px/14px "Noto Sans", sans-serif;
}

.balance a {
    color: #a0a0a0;
    font-family: "Liberation Sans", sans-serif;
    text-decoration: underline;
}

.form .bar {
    padding: 0 7px 0 11px;
}

.form .tight {
    padding-left: 6px;
}

.form .result-bar, .form .resources-bar, .form .resources-head {
    display: grid;
    grid-template-columns: 74px 108px 224px 1fr auto;
    padding-left: 8px;
}

.result-bar {
    font-size: 14px;
}

.fields {
    display: flex;
    align-items: center;
    margin-top: 9px;
    height: 20px;
}

.fields-2 {
    margin: 4px 0 10px;
}

.form label {
    width: 43px;
    padding-left: 11px;
    font: 12px/20px "Noto Sans", sans-serif;
    white-space: nowrap;
}

.form .l-result {
    width: 53px;
    padding-left: 12px;
}

.form .l-parties {
    width: 104px;
    padding-left: 14px;
}

.form .l-end {
    padding-left: 14px;
}

.form .l-dur {
    padding-left: 16px;
}

.form input, .combo {
    height: 20px;
    min-width: 0;
    border: 1px solid #999;
    background: #fff;
}

.form .grow {
    flex: 1;
}

.w-time {
    width: 60px;
}

.w-combo {
    width: 175px;
}

.combo {
    position: relative;
    display: flex;
}

.combo select {
    flex: 1;
    min-width: 0;
    appearance: none;
    border: none;
    padding: 0 0 0 2px;
    background: none;
    color: #000;
    font: 14px/18px "Liberation Sans", sans-serif;
}

.combo i {
    width: 14px;
    flex: none;
    border-left: 1px solid #999;
    background: #e1e1e8;
    color: #000;
    font: 10px/17px "DejaVu Sans", sans-serif;
    text-align: center;
}

.form .blue, .blue i {
    border-color: #0000e0;
}

.form .yellow {
    background: #ffffc8;
}

.field-icon {
    margin-left: 6px;
}

.end-icon {
    margin-left: 3px;
    margin-right: 6px;
}

.spell-icon {
    margin-right: 2px;
}

.options {
    position: absolute;
    z-index: 2;
    left: -1px;
    top: 21px;
    width: 228px;
    padding: 1px 17px 1px 0;
    border: 1px solid #2a72ea;
    background: #fff;
    color: #000;
    font: 13px/16px "Liberation Sans", sans-serif;
    list-style: none;
}

.options li {
    padding-left: 2px;
    white-space: nowrap;
}

.options .picked {
    background: #dceaf5;
}

.options-scroll {
    position: absolute;
    right: 2px;
    top: 2px;
}

.grip {
    position: absolute;
    right: 0;
    bottom: 0;
}

.form .resources-bar {
    grid-template-columns: 235px auto;
    justify-content: start;
}

.form .resources-head {
    grid-template-columns: 102px 379px 88px auto;
    justify-content: start;
    margin-top: 5px;
}

.resources {
    display: grid;
    grid-template-columns: 275px 1fr;
    gap: 20px;
    margin: 5px 0 18px;
}

.resource-rows {
    display: grid;
    grid-template-columns: 103px 1fr;
    gap: 2px 0;
    padding-top: 2px;
    align-content: start;
}

.form .resource-rows label {
    padding-left: 5px;
}

.resource-side {
    display: grid;
    grid-template-columns: 1fr 150px;
    gap: 10px 20px;
}

.wide {
    grid-column: span 2;
}

.slot {
    height: 6px;
    margin: 5px 1px 0 0;
    border: 1px solid #4f9ad0;
}

.resource-side .wide {
    margin-top: 0;
}

.form .right {
    justify-content: flex-end;
    padding-right: 9px;
}

.block {
    margin-bottom: 10px;
}

.pair {
    display: grid;
    grid-template-columns: 350px 1fr;
    column-gap: 20px;
}

.last-pair {
    display: grid;
    grid-template-columns: 256px 433px;
    gap: 20px;
}

.form .charge-links {
    overflow: hidden;
    justify-content: flex-start;
    gap: 22px;
    padding-left: 27px;
}

.modal-foot {
    height: 26px;
    flex: none;
    display: flex;
    align-items: center;
    margin: 0 2px 2px;
    padding: 0 45px 0 10px;
    gap: 20px;
    background: #dcdcdc;
}

.modal-foot button {
    width: 70px;
    height: 20px;
    border: 1px solid #b8b8b8;
    background: #f8f8f8;
    color: #333;
    font: 12px/18px "Noto Sans", sans-serif;
}

.modal-foot .b-copy {
    width: 103px;
}

.b-save {
    margin-left: 162px;
}

.b-forms {
    margin-left: auto;
}

/* Status line */
.status {
    height: 24px;
    flex: none;
    display: flex;
    padding-left: 12px;
    color: #000;
    font-size: 13px;
    line-height: 22px;
}

.status span + span::before {
    content: "|";
    margin: 0 8px;
}

.status sup {
    font-size: 9px;
    line-height: 0;
    vertical-align: 3px;
}

/* Taskbar */
.taskbar {
    height: 40px;
    flex: none;
    display: flex;
    background: linear-gradient(90deg, #22363d, #1f3040 60%, #1a2743);
    color: #fff;
}

.start {
    width: 48px;
    display: flex;
    align-items: center;
    justify-content: center;
}

.search {
    width: 288px;
    display: flex;
    align-items: center;
    gap: 8px;
    padding-left: 11px;
    border: 1px solid #aaa;
    background: #f2f2f2;
}

.search input {
    flex: 1;
    min-width: 0;
    border: none;
    background: none;
    font: 14px "Open Sans", sans-serif;
}

.apps {
    display: flex;
    gap: 9px;
    padding-left: 6px;
}

.apps button {
    width: 40px;
    display: flex;
    align-items: center;
    justify-content: center;
    border: solid transparent;
    border-width: 2px 0;
}

.apps .open {
    border-bottom-color: #76b9ed;
}

.apps .focused {
    width: 48px;
    margin: 0 -4px;
    background-color: #4f6169;
}

.glyph {
    fill: #fff;
    font: bold 11px "Open Sans", sans-serif;
    text-anchor: middle;
}

.tray {
    margin-left: auto;
    display: flex;
    align-items: center;
    gap: 9px;
}

.clock {
    width: 50px;
    margin-right: 10px;
    display: flex;
    flex-direction: column;
    text-align: center;
    line-height: 18px;
}

.notice {
    position: relative;
    width: 28px;
}

.notice span {
    position: absolute;
    left: 8px;
    top: 7px;
    width: 16px;
    border-radius: 8px;
    background: #4a4f58;
    font-weight: bold;
    line-height: 16px;
    text-align: center;
}

.desk {
    width: 5px;
    height: 40px;
    border-left: 1px solid #7a8494;
}
```
